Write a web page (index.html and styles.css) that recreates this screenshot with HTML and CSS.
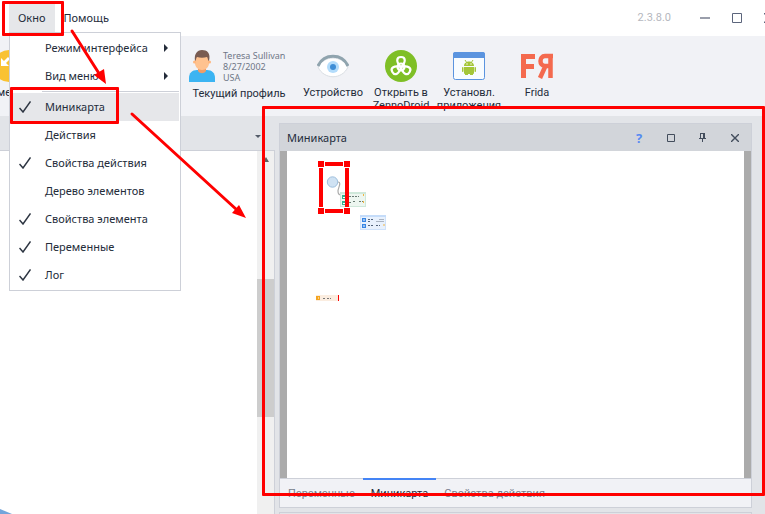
FILE: index.html
```html
<!DOCTYPE html>
<html lang="ru">
<head>
<meta charset="utf-8">
<title>Миникарта</title>
<link rel="stylesheet" href="styles.css">
</head>
<body>
<header class="titlebar">
  <nav class="menubar">
    <button class="menu-button open">Окно</button>
    <button class="menu-button">Помощь</button>
  </nav>
  <span class="version">2.3.8.0</span>
  <div class="window-controls">
    <button aria-label="Свернуть"><svg width="10" height="10"><path d="M0 5h10" stroke="#9a9eab" stroke-width="2"/></svg></button>
    <button aria-label="Развернуть"><svg width="10" height="10"><path d="M.5.5h9v9h-9z" fill="none" stroke="#5c657c"/></svg></button>
    <button aria-label="Закрыть"><svg width="10" height="10"><path d="M0 0l10 10M10 0L0 10" stroke="#5c657c" stroke-width="1.3"/></svg></button>
  </div>
</header>

<section class="toolbar">
  <button class="tool first">
    <svg width="32" height="32" viewBox="0 0 32 32"><circle cx="16" cy="16" r="16" fill="#f9c232"/><path d="M8 8v8h8l-3-3 4-4-2-2-4 4z" fill="#fff"/></svg>
    <span>ме</span>
  </button>
  <button class="tool profile">
    <span class="profile-card">
      <svg width="26" height="32" viewBox="0 0 26 32"><path d="M0 32v-4c0-5 3-8 8-8h10c5 0 8 3 8 8v4z" fill="#3cb4f2"/><path d="M9 16h8v5c-2 3-6 3-8 0z" fill="#f19d67"/><path d="M6 6h14v7c0 4-3 7-7 7s-7-3-7-7z" fill="#ffc28f"/><circle cx="5.500" cy="12" r="1.500" fill="#ffb67c"/><circle cx="20.500" cy="12" r="1.500" fill="#ffb67c"/><path d="M6 11C5 4 8 0 13 0s9 3 7 11c-1 0-1-3-2-4-3 1-7 1-10 0-1 1-1 4-2 4z" fill="#795c52"/></svg>
      <span class="profile-info">Teresa Sullivan<br>8/27/2002<br>USA</span>
    </span>
    <span>Текущий профиль</span>
  </button>
  <button class="tool">
    <svg width="32" height="32" viewBox="0 0 32 32"><path d="M1 17C7 5 25 5 31 17c-6 13-24 13-30 0z" fill="#fff" stroke="#d9dee3"/><path d="M1 16C7 3 25 3 31 16" fill="none" stroke="#90a4ae" stroke-width="3"/><circle cx="16" cy="17" r="6" fill="#b3dcfb"/><circle cx="16" cy="17" r="3" fill="#3f8ed6"/></svg>
    <span>Устройство</span>
  </button>
  <button class="tool">
    <svg width="32" height="32" viewBox="0 0 32 32"><circle cx="16" cy="16" r="16" fill="#7fbf26"/><g fill="none" stroke="#fff" stroke-width="2.200"><path d="M16 17C11 12 11 7 16 7s5 5 0 10z"/><path d="M16 17C11 12 11 7 16 7s5 5 0 10z" transform="rotate(120 16 17)"/><path d="M16 17C11 12 11 7 16 7s5 5 0 10z" transform="rotate(240 16 17)"/><circle cx="16" cy="17" r="3.500"/></g></svg>
    <span>Открыть в ZennoDroid</span>
  </button>
  <button class="tool">
    <svg width="32" height="32" viewBox="0 0 32 32"><rect x=".5" y="2.500" width="31" height="27" rx="2" fill="#f8fcff" stroke="#5b94df"/><path d="M0 8V4q0-2 2-2h28q2 0 2 2v4z" fill="#5b94df"/><g fill="#a4c639"><path d="M11 16c0-6 10-6 10 0zM11 17h10v6q0 1-1 1H12q-1 0-1-1z"/><path d="M12 22h3v3h-3zM17 22h3v3h-3z"/><rect x="9" y="17" width="1.500" height="5" rx=".7"/><rect x="21.500" y="17" width="1.500" height="5" rx=".7"/><path d="M12 10l2 3M20 10l-2 3" stroke="#a4c639"/></g><circle cx="14" cy="14" r=".7" fill="#fff"/><circle cx="18" cy="14" r=".7" fill="#fff"/></svg>
    <span>Установл. приложения</span>
  </button>
  <button class="tool">
    <svg width="32" height="32" viewBox="0 0 32 32" fill="none" stroke="#f46a4e" stroke-width="5"><path d="M2.500 28V4M0 6.500h14M0 16.500h13"/><path d="M29.500 28V4M32 6h-8c-6 0-6 10 0 10h6M24 17l-5 11" stroke-width="4.500"/></svg>
    <span>Frida</span>
  </button>
</section>

<main class="workspace">
  <section class="document">
    <div class="document-bar"><svg width="6" height="4"><path d="M0 0h6L3 3z" fill="#535b68"/></svg></div>
    <div class="document-body">
      <svg class="corner-shape" width="14" height="6"><path d="M0 1l12 5H0z" fill="#73a5db"/></svg>
      <div class="scrollbar"><svg width="6" height="5"><path d="M0 5h6L3 0z" fill="#606060"/></svg><div class="thumb"></div></div>
    </div>
  </section>
  <div class="dock">
    <section class="panel">
      <header class="panel-head">
        <h1>Миникарта</h1>
        <button class="help" aria-label="Справка">?</button>
        <button aria-label="Развернуть панель"><svg width="8" height="8"><path d="M.5.5h7v7h-7z" fill="none" stroke="#434d5c"/></svg></button>
        <button aria-label="Закрепить"><svg width="8" height="9"><path d="M1.500 0v5M1 .5h5M0 5.500h7M3.500 6v3" fill="none" stroke="#434d5c"/><path d="M4 0h2v5H4z" fill="#434d5c"/></svg></button>
        <button aria-label="Закрыть панель"><svg width="8" height="8"><path d="M0 0l8 8M8 0L0 8" stroke="#434d5c" stroke-width="1.400"/></svg></button>
      </header>
      <div class="map">
        <svg class="map-canvas" width="150" height="170" viewBox="0 0 150 170">
          <circle cx="45.500" cy="31" r="5.200" fill="#cfe2f3" stroke="#9fc0dd"/>
          <path d="M51 31c4 0 0 6 0 9 0 2 1 4 3 4" fill="none" stroke="#aaa" stroke-width="1.200"/>
          <g transform="translate(7 0)">
            <rect x="46.500" y="41.500" width="25" height="14" fill="#edf6f0" stroke="#cfe8da"/><path d="M46 42h26" stroke="#cfe8da" stroke-width="2"/>
            <path d="M48 44h4v4h-4zM48 50h4v4h-4z" fill="#35b28f"/><path d="M49 46.500h3M49 52.500h3" stroke="#fff"/>
            <path d="M55 45.500h10M55 51.500h3M59 50.500h2M65 50.500h4" stroke="#697b73" stroke-dasharray="2 1"/>
            <path d="M69.500 43v2M69.500 50v2" stroke="#f2b441"/>
          </g>
          <rect x="73.500" y="64.500" width="25" height="14" fill="#e8f1fd" stroke="#cfe2fa"/><path d="M73 65h26" stroke="#c5dcf9" stroke-width="2"/>
          <path d="M75 67h4v4h-4zM75 73h4v4h-4z" fill="#3685e4"/>
          <path d="M76 69h2M76 75h2" stroke="#fff"/>
          <path d="M81 68.500h5M81 70.500h3M81 74.500h6M89 74.500h4" stroke="#52637b" stroke-dasharray="2 1"/>
          <path d="M89 70.500h8M92 68.500h5" stroke="#aab4c2"/><path d="M97 73v2" stroke="#f2b441"/>
          <path d="M29 144h22v6H29z" fill="#fbede0"/><path d="M29 145h4v4h-4z" fill="#f4a521"/><path d="M31 147h1" stroke="#fff"/>
          <path d="M36 147.500h3M40 147.500h4" stroke="#777" stroke-dasharray="2 1"/><path d="M51.500 144v6" stroke="#f00"/>
          <g fill="#f00"><path d="M38 11h18v4H38zM38 58h18v4H38zM32 17h4v39h-4zM58 17h4v39h-4z"/><path d="M31 10h6v6h-6zM57 10h6v6h-6zM31 57h6v6h-6zM57 57h6v6h-6z"/></g>
        </svg>
      </div>
      <nav class="tabs">
        <button>Переменные</button>
        <button class="active">Миникарта</button>
        <button>Свойства действия</button>
      </nav>
    </section>
    <section class="panel next-panel"></section>
  </div>
</main>

<div class="menu" role="menu">
  <button class="menu-item" role="menuitem"><i></i>Режим интерфейса<svg class="more" width="4" height="8"><path d="M0 0l4 4-4 4z" fill="#242c3a"/></svg></button>
  <button class="menu-item" role="menuitem"><i></i>Вид меню<svg class="more" width="4" height="8"><path d="M0 0l4 4-4 4z" fill="#242c3a"/></svg></button>
  <hr>
  <button class="menu-item current" role="menuitem"><i><svg width="12" height="12"><path d="M.5 7L4 11 11.500.5" fill="none" stroke="#2d3542" stroke-width="1.500"/></svg></i>Миникарта</button>
  <button class="menu-item" role="menuitem"><i></i>Действия</button>
  <button class="menu-item" role="menuitem"><i><svg width="12" height="12"><path d="M.5 7L4 11 11.500.5" fill="none" stroke="#2d3542" stroke-width="1.500"/></svg></i>Свойства действия</button>
  <button class="menu-item" role="menuitem"><i></i>Дерево элементов</button>
  <button class="menu-item" role="menuitem"><i><svg width="12" height="12"><path d="M.5 7L4 11 11.500.5" fill="none" stroke="#2d3542" stroke-width="1.500"/></svg></i>Свойства элемента</button>
  <button class="menu-item" role="menuitem"><i><svg width="12" height="12"><path d="M.5 7L4 11 11.500.5" fill="none" stroke="#2d3542" stroke-width="1.500"/></svg></i>Переменные</button>
  <button class="menu-item" role="menuitem"><i><svg width="12" height="12"><path d="M.5 7L4 11 11.500.5" fill="none" stroke="#2d3542" stroke-width="1.500"/></svg></i>Лог</button>
</div>

<div class="mark mark-menu"></div>
<div class="mark mark-item"></div>
<div class="mark mark-panel"></div>
<svg class="arrows" width="260" height="230" viewBox="0 0 260 230">
  <g stroke="#f00" stroke-width="3" stroke-linecap="round"><path d="M72 31L100 75M132 114L237 210"/></g>
  <path d="M106 84L94 75l10-6zM246 218L232 213l7-8z" fill="#f00"/>
</svg>
</body>
</html>
```
FILE: styles.css
```css
* { box-sizing: border-box; }
body {
  position: relative;
  display: flex;
  flex-direction: column;
  min-height: 100vh;
  margin: 0;
  overflow: hidden;
  background: #e2e4e8;
  color: #242c3a;
  font: 11px/16px "Noto Sans", sans-serif;
}
button {
  padding: 0;
  border: 0;
  background: none;
  color: inherit;
  font: inherit;
}
svg { display: block; flex: none; }

.titlebar {
  display: flex;
  align-items: center;
  height: 36px;
  background: #fff;
}
.menubar { display: flex; flex: 1; padding-left: 9px; }
.menu-button { height: 30px; padding: 0 9px; }
.menu-button.open { background: #e6e7ea; }
.version { margin-right: 18px; color: #b5b7be; font-family: Roboto, sans-serif; }
.window-controls { display: flex; margin-right: -20px; }
.window-controls button {
  display: grid;
  place-items: center;
  width: 32px;
  height: 36px;
}

.toolbar {
  display: flex;
  height: 80px;
  padding-top: 14px;
  background: #f1f2f6;
}
.tool {
  display: flex;
  flex-direction: column;
  align-items: center;
  gap: 4px;
  width: 68px;
  font: 11px/13px Roboto, sans-serif;
}
.tool.first { align-items: flex-start; width: 187px; margin-left: -8px; padding-left: 1px; }
.tool.first span { padding-left: 4px; }
.tool.profile { width: 120px; }
.profile-card { display: flex; gap: 8px; width: 100px; }
.profile-info {
  color: #6f7787;
  font: 9px/11px "Noto Sans", sans-serif;
  text-align: left;
  white-space: nowrap;
}

.workspace { display: flex; flex: 1; gap: 4px; }
.document { display: flex; flex-direction: column; width: 275px; }
.document-bar {
  display: flex;
  align-items: center;
  justify-content: flex-end;
  height: 34px;
  padding: 7px 14px 0 0;
}
.document-body {
  display: flex;
  flex: 1;
  align-items: flex-end;
  justify-content: space-between;
  border: 1px solid #cdd0d8;
  border-width: 1px 1px 0 0;
  background: #fff;
}
.scrollbar {
  display: flex;
  flex-direction: column;
  align-items: center;
  align-self: stretch;
  width: 17px;
  padding-top: 6px;
  background: #f0f0f0;
}
.thumb { width: 100%; height: 138px; margin-top: 117px; background: #cdcdcd; }

.dock {
  display: flex;
  flex: 1;
  flex-direction: column;
  gap: 4px;
  padding: 7px 13px 0 0;
}
.panel {
  display: flex;
  flex: 1;
  flex-direction: column;
  border: 1px solid #cdd0d8;
}
.next-panel { flex: none; height: 2px; border-bottom: 0; }
.panel-head {
  display: flex;
  align-items: center;
  height: 27px;
  background: #d2d5da;
}
.panel-head h1 { flex: 1; margin: 0; padding-left: 7px; font: inherit; }
.panel-head button {
  display: grid;
  place-items: center;
  width: 32px;
  height: 26px;
  color: #434d5c;
}
.panel-head .help { color: #568af2; font-size: 13px; font-weight: 700; }
.map {
  flex: 1;
  border: solid #ababab;
  border-width: 0 7px;
  background: #fff;
}
.tabs {
  display: flex;
  height: 29px;
  border-top: 1px solid #cdd0d8;
  background: #f1f2f6;
  color: #777e8c;
}
.tabs button {
  margin-top: -1px;
  padding: 0 8px;
  border-top: 2px solid transparent;
  font-family: Roboto, sans-serif;
}
.tabs .active { border-color: #4484f5; color: #242c3a; }

.menu {
  position: absolute;
  top: 32px;
  left: 9px;
  width: 172px;
  padding: 1px;
  border: 1px solid #cdd0d8;
  background: #fff;
}
.menu-item { display: flex; align-items: center; width: 100%; height: 28px; }
.menu-item i { width: 34px; padding-left: 8px; }
.menu-item .more { margin: 0 11px 0 auto; }
.menu-item.current { background: #e6e7ea; }
.menu hr { height: 1px; margin: 1px 0 1px 31px; border: 0; background: #cdd0d8; }

.mark { position: absolute; border: 3px solid #f00; border-radius: 1px; pointer-events: none; }
.mark-menu { top: 1px; left: 2px; width: 62px; height: 35px; }
.mark-item { top: 87px; left: 10px; width: 109px; height: 37px; }
.mark-panel { top: 106px; right: 0; bottom: 18px; left: 262px; }
.arrows { position: absolute; top: 0; left: 0; pointer-events: none; }
```
